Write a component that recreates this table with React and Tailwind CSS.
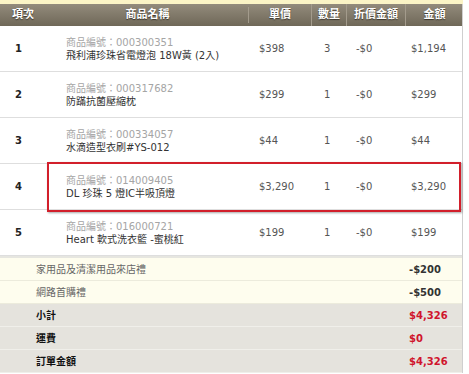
import React from "react";

const items = [
  { no: 1, code: "000300351", name: "飛利浦珍珠省電燈泡 18W黃 (2入)", price: "$398", qty: 3, disc: "-$0", total: "$1,194" },
  { no: 2, code: "000317682", name: "防蹣抗菌壓縮枕", price: "$299", qty: 1, disc: "-$0", total: "$299" },
  { no: 3, code: "000334057", name: "水滴造型衣刷#YS-012", price: "$44", qty: 1, disc: "-$0", total: "$44" },
  { no: 4, code: "014009405", name: "DL 珍珠 5 燈IC半吸頂燈", price: "$3,290", qty: 1, disc: "-$0", total: "$3,290" },
  { no: 5, code: "016000721", name: "Heart 軟式洗衣籃 -蜜桃紅", price: "$199", qty: 1, disc: "-$0", total: "$199" },
];

const discounts = [
  { label: "家用品及清潔用品來店禮", value: "-$200" },
  { label: "網路首購禮", value: "-$500" },
];

const totals = [
  { label: "小計", value: "$4,326" },
  { label: "運費", value: "$0" },
  { label: "訂單金額", value: "$4,326" },
];

const cols = "grid grid-cols-[47px_202px_63px_35px_59px_57px]";

export default function App() {
  return (
    <div
      className="w-[469px] h-[374px] bg-white overflow-hidden text-[10px] text-[#555]"
      style={{ fontFamily: '"DejaVu Sans", "Noto Sans CJK TC", sans-serif' }}
    >
      <div className="h-[4px] w-[463px] bg-[#fbf4c6]" />
      <div className="relative w-[463px] border-r border-[#cfcfcf]">
        {/* header */}
        <div className={`${cols} h-[22px] bg-gradient-to-b from-[#938b7c] to-[#6f6858] text-white font-bold text-[11px] items-center [text-shadow:0_1px_1px_#3a342a]`}>
          <div className="pl-[12px]">項次</div>
          <div className="text-center border-r border-[#a39b8c]">商品名稱</div>
          <div className="text-center border-r border-[#a39b8c] h-full flex items-center justify-center">單價</div>
          <div className="text-center border-r border-[#a39b8c] h-full flex items-center justify-center">數量</div>
          <div className="text-center border-r border-[#a39b8c] h-full flex items-center justify-center">折價金額</div>
          <div className="text-center">金額</div>
        </div>

        {/* items */}
        {items.map((it) => (
          <div key={it.no} className={`${cols} h-[46px] items-center border-b border-[#dedede]`}>
            <div className="pl-[15px] font-bold text-[#222]">{it.no}</div>
            <div className="pl-[19px] leading-[13px]">
              <div className="text-[#a5a5a5]">商品編號：{it.code}</div>
              <div className="text-[#333]">{it.name}</div>
            </div>
            <div className="pl-[10px]">{it.price}</div>
            <div className="pl-[12px]">{it.qty}</div>
            <div className="pl-[9px]">{it.disc}</div>
            <div className="pl-[5px]">{it.total}</div>
          </div>
        ))}

        <div className="h-[2px] bg-[#e6e6e0]" />

        {/* discounts */}
        {discounts.map((d) => (
          <div key={d.label} className="flex h-[23px] items-center bg-[#fefdee] border-b border-[#ecebdc]">
            <div className="pl-[36px] w-[409px] text-[#666]">{d.label}</div>
            <div className="font-bold text-[#333]">{d.value}</div>
          </div>
        ))}

        {/* totals */}
        {totals.map((t) => (
          <div key={t.label} className="flex h-[23px] items-center bg-[#e5e3dd] border-b border-[#f0efea]">
            <div className="pl-[36px] w-[409px] font-bold text-[#111]">{t.label}</div>
            <div className="font-bold text-[#d0142c]">{t.value}</div>
          </div>
        ))}

        {/* highlight box */}
        <div className="absolute left-[47px] top-[158px] w-[414px] h-[50px] border-2 border-[#d21f2b] shadow-[1px_1px_2px_rgba(0,0,0,0.35)] pointer-events-none" />
      </div>
    </div>
  );
}
